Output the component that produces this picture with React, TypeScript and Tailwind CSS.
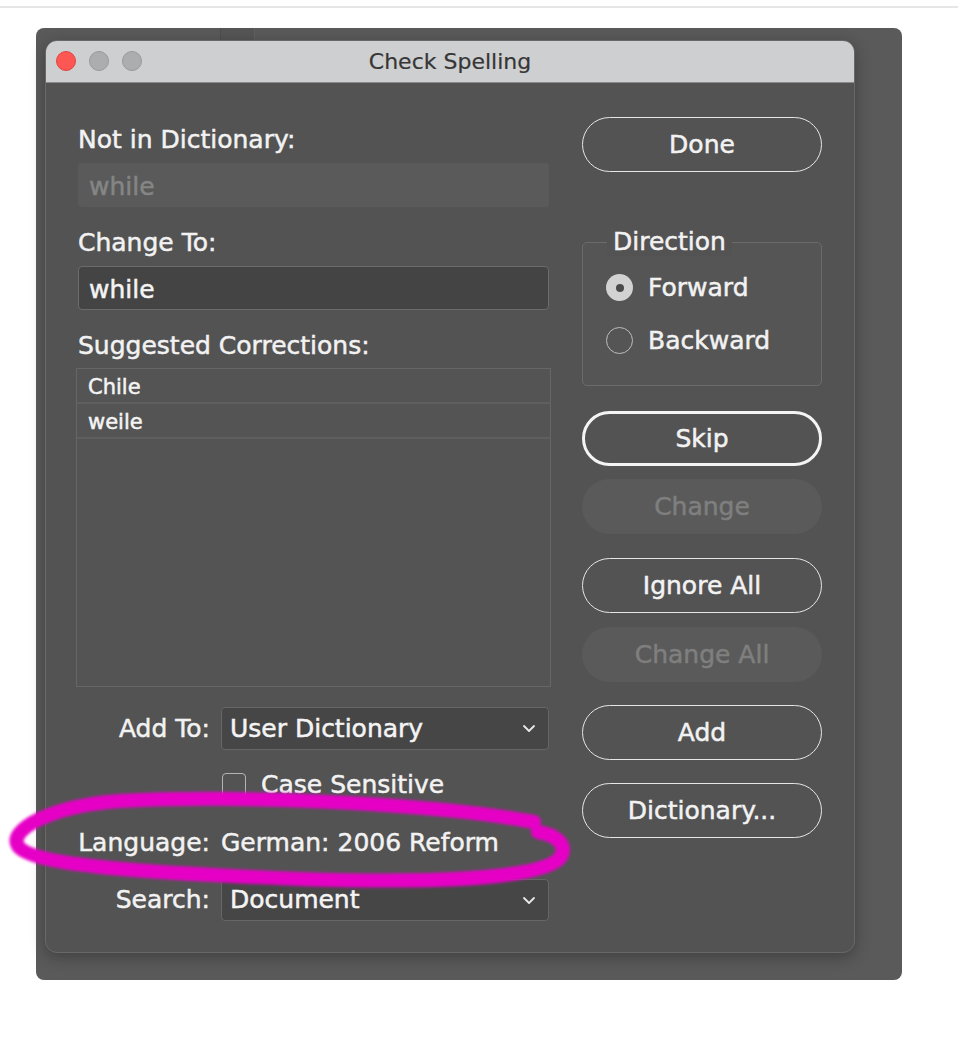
import React from "react";

const Chevron = () => (
  <svg width="14" height="9" viewBox="0 0 14 9" className="shrink-0">
    <polyline points="2,2 7,7 12,2" fill="none" stroke="#e8e8e8" strokeWidth="1.8" strokeLinecap="round" strokeLinejoin="round" />
  </svg>
);

const PillButton = ({ label, variant = "normal" }: { label: string; variant?: "normal" | "default" | "disabled" }) => {
  if (variant === "disabled") {
    return (
      <div className="h-[55px] w-full rounded-full bg-[#5a5a5a] flex items-center justify-center text-[25px] text-[#7f7f7f]">
        {label}
      </div>
    );
  }
  return (
    <div
      className={`h-[55px] w-full rounded-full flex items-center justify-center text-[25px] text-[#f2f2f2] ${
        variant === "default" ? "border-[3px] border-[#f4f4f4]" : "border-[1.5px] border-[#e6e6e6]"
      }`}
    >
      {label}
    </div>
  );
};

const CheckSpelling = () => {
  const suggestions = ["Chile", "weile"];

  return (
    <div className="w-[810px] rounded-[12px] overflow-hidden bg-[#535353] shadow-[0_4px_16px_rgba(0,0,0,0.3)] border border-[#686868] [-webkit-text-stroke:0.5px_currentColor]">
      {/* Title bar */}
      <div className="relative h-[42px] bg-[#cdcfd0] border-b border-[#8a8a8a] flex items-center justify-center">
        <div className="absolute left-[10px] top-[10px] flex gap-[13px]">
          <span className="w-[20px] h-[20px] rounded-full bg-[#fc5753] border border-[#e04440]" />
          <span className="w-[20px] h-[20px] rounded-full bg-[#abadae] border border-[#999a9b]" />
          <span className="w-[20px] h-[20px] rounded-full bg-[#abadae] border border-[#999a9b]" />
        </div>
        <span className="text-[22px] text-[#363636] [-webkit-text-stroke:0.2px_currentColor]">Check Spelling</span>
      </div>

      {/* Body */}
      <div className="flex gap-[33px] px-[32px] pt-[34px] pb-[31px]">
        {/* Left column */}
        <div className="w-[471px] pt-[10px] flex flex-col">
          <div className="h-[26px] leading-[26px] text-[25px] text-[#f2f2f2]">Not in Dictionary:</div>
          <div className="mt-[10px] h-[44px] rounded-[4px] bg-[#5a5a5a] px-[11px] pt-[3px] flex items-center text-[25px] text-[#858585]">
            while
          </div>

          <div className="mt-[23px] h-[26px] leading-[26px] text-[25px] text-[#f2f2f2]">Change To:</div>
          <div className="mt-[10px] h-[44px] rounded-[4px] bg-[#444444] border border-[#6c6c6c] px-[10px] pt-[3px] flex items-center text-[25px] text-[#f4f4f4]">
            while
          </div>

          <div className="mt-[23px] h-[26px] leading-[26px] text-[25px] text-[#f2f2f2]">Suggested Corrections:</div>
          <div className="mt-[9px] -ml-[2px] w-[475px] h-[319px] border border-[#666666] bg-[#545454]">
            {suggestions.map((s) => (
              <div key={s} className="h-[35px] border-b-2 border-[#5f5f5f] px-[11px] pt-[4px] flex items-center text-[21px] text-[#f4f4f4]">
                {s}
              </div>
            ))}
          </div>

          <div className="mt-[20px] flex items-center gap-[11px]">
            <div className="w-[132px] text-right text-[25px] text-[#f2f2f2]">Add To:</div>
            <div className="flex-1 h-[43px] rounded-[4px] bg-[#464646] border border-[#666666] pl-[8px] pr-[12px] flex items-center justify-between text-[25px] text-[#f4f4f4]">
              <span>User Dictionary</span>
              <Chevron />
            </div>
          </div>

          <div className="mt-[22px] h-[26px] flex items-center gap-[15px] pl-[144px]">
            <span className="w-[24px] h-[24px] rounded-[4px] border-[1.5px] border-[#b4b4b4]" />
            <span className="text-[25px] text-[#f2f2f2]">Case Sensitive</span>
          </div>

          <div className="mt-[32px] h-[26px] flex items-center gap-[11px]">
            <div className="w-[132px] text-right text-[25px] text-[#f2f2f2]">Language:</div>
            <div className="text-[25px] text-[#f2f2f2]">German: 2006 Reform</div>
          </div>

          <div className="mt-[23px] flex items-center gap-[11px]">
            <div className="w-[132px] text-right text-[25px] text-[#f2f2f2]">Search:</div>
            <div className="flex-1 h-[42px] rounded-[4px] bg-[#464646] border border-[#666666] pl-[8px] pr-[12px] flex items-center justify-between text-[25px] text-[#f4f4f4]">
              <span>Document</span>
              <Chevron />
            </div>
          </div>
        </div>

        {/* Right column */}
        <div className="w-[241px] flex flex-col">
          <PillButton label="Done" />

          <div className="relative mt-[70px] h-[144px] rounded-[5px] border border-[#6b6b6b] bg-[#555555]">
            <span className="absolute -top-[15px] left-[24px] px-[6px] bg-[#535353] text-[25px] leading-[28px] text-[#f2f2f2]">
              Direction
            </span>
            <div className="pt-[31px] pl-[23px] flex flex-col gap-[26px]">
              <div className="flex items-center gap-[15px] h-[27px]">
                <span className="w-[27px] h-[27px] rounded-full bg-[#d2d2d2] flex items-center justify-center">
                  <span className="w-[8px] h-[8px] rounded-full bg-[#4a4a4a]" />
                </span>
                <span className="text-[25px] text-[#f2f2f2]">Forward</span>
              </div>
              <div className="flex items-center gap-[15px] h-[27px]">
                <span className="w-[27px] h-[27px] rounded-full border-[1.5px] border-[#bdbdbd]" />
                <span className="text-[25px] text-[#f2f2f2]">Backward</span>
              </div>
            </div>
          </div>

          <div className="mt-[25px]">
            <PillButton label="Skip" variant="default" />
          </div>
          <div className="mt-[13px]">
            <PillButton label="Change" variant="disabled" />
          </div>
          <div className="mt-[24px]">
            <PillButton label="Ignore All" />
          </div>
          <div className="mt-[14px]">
            <PillButton label="Change All" variant="disabled" />
          </div>
          <div className="mt-[23px]">
            <PillButton label="Add" />
          </div>
          <div className="mt-[23px]">
            <PillButton label="Dictionary..." />
          </div>
        </div>
      </div>
    </div>
  );
};

export default function App() {
  return (
    <div className="relative w-[958px] h-[1038px] bg-white overflow-hidden font-['DejaVu_Sans',sans-serif]">
      <div className="h-[6px]" />
      <div className="h-[2px] bg-[#e6e6e6]" />

      {/* Application window behind the dialog */}
      <div className="mt-[20px] ml-[36px] w-[866px] h-[952px] rounded-[8px] bg-[#5a5a5a] flex flex-col">
        <div className="h-[12px] flex">
          <div className="w-[185px] border-r border-[#4e4e4e]" />
          <div className="w-[34px] bg-[#565656] border-r border-[#626262]" />
        </div>
        <div className="pl-[9px] flex items-start">
          <CheckSpelling />
        </div>
      </div>

      {/* Hand-drawn highlight */}
      <svg className="absolute left-0 top-0 pointer-events-none" width="958" height="1038" viewBox="0 0 958 1038">
        <defs>
          <filter id="soft" x="-5%" y="-20%" width="110%" height="140%">
            <feGaussianBlur stdDeviation="1.8" />
          </filter>
        </defs>
        <path
          d="M 534 822 C 450 806, 260 794, 120 801 C 50 806, 8 830, 18 846 C 32 866, 150 873, 300 879 C 420 883, 540 880, 560 858 C 570 843, 552 834, 538 832"
          fill="none"
          stroke="#e600c6"
          strokeWidth="14"
          strokeLinecap="round"
          filter="url(#soft)"
        />
      </svg>
    </div>
  );
}
